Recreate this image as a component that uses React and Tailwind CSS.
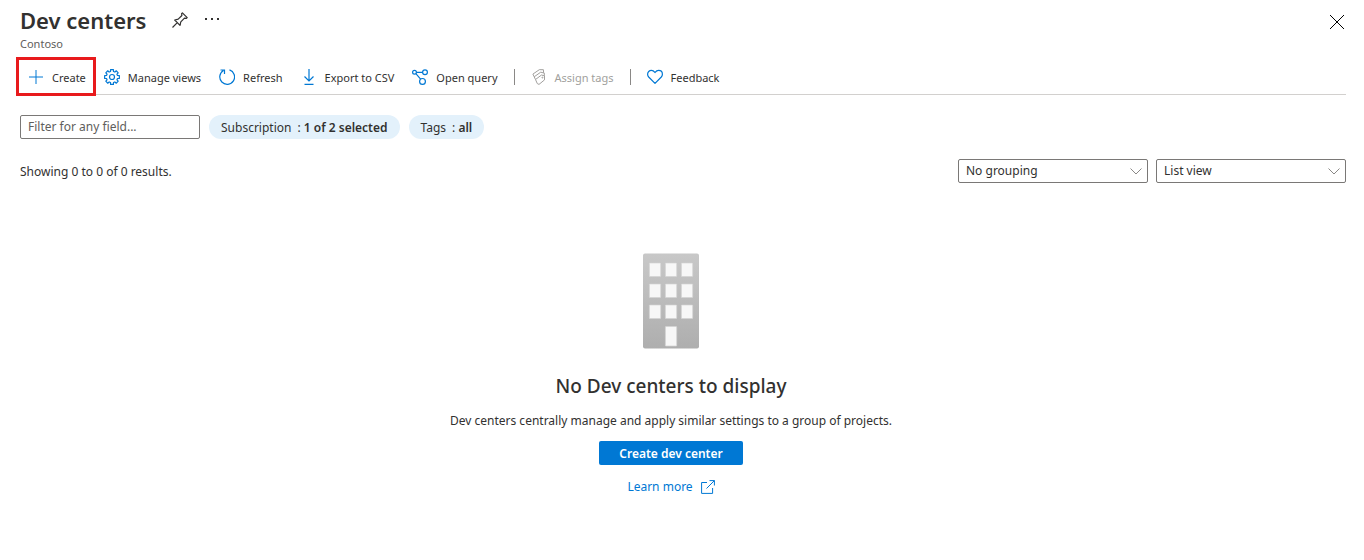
function Icon({ size = 16, box = 16, className = '', width = 1, children }) {
  return (
    <svg
      width={size}
      height={size}
      viewBox={`0 0 ${box} ${box}`}
      fill="none"
      stroke="currentColor"
      strokeWidth={width}
      className={`shrink-0 ${className}`}
      aria-hidden="true"
    >
      {children}
    </svg>
  );
}

const PlusIcon = () => (
  <Icon className="text-[#0078d4]">
    <path d="M8 1v14M1 8h14" />
  </Icon>
);

const TOOTH_ANGLES = [0, 45, 90, 135, 180, 225, 270, 315];

function toothPoint(radius, degrees) {
  const angle = (degrees * Math.PI) / 180;
  return `${(8 + radius * Math.cos(angle)).toFixed(2)} ${(8 + radius * Math.sin(angle)).toFixed(2)}`;
}

const GEAR_PATH = `M${TOOTH_ANGLES.map((a) =>
  [toothPoint(5.7, a - 15), toothPoint(7.5, a - 11), toothPoint(7.5, a + 11), toothPoint(5.7, a + 15)].join('L'),
).join('L')}z`;

const GearIcon = () => (
  <Icon className="text-[#0078d4]" width={1.2}>
    <path strokeLinejoin="round" d={GEAR_PATH} />
    <circle cx="8" cy="8" r="2.500" />
  </Icon>
);

const RefreshIcon = () => (
  <Icon className="text-[#0078d4]" width={1.2}>
    <path d="M10.500 .9A7.400 7.400 0 1 1 4.500 1.500M1.500 1h4v4" />
  </Icon>
);

const DownloadIcon = () => (
  <Icon className="text-[#0078d4]" width={1.2}>
    <path d="M8 0v12M3.500 7.500 8 12l4.500-4.500M3.500 15.400h9" />
  </Icon>
);

const QueryIcon = () => (
  <Icon className="text-[#0078d4]" width={1.2}>
    <circle cx="2.500" cy="3.300" r="1.900" />
    <circle cx="13" cy="3.300" r="2.400" />
    <circle cx="10.500" cy="12.400" r="2.900" />
    <path d="M4.400 3.300h6.200M3.900 4.700l4.700 5.400" />
  </Icon>
);

const TagsIcon = () => (
  <Icon className="text-[#a19f9d]">
    <path
      strokeLinejoin="round"
      d="M4.500 10.500 10.500 6l3 .9v4L8 15.400 6.300 14.600zM4.500 10.500 3.200 7.800 9.700 3.200l3.600.9v2.800M3.200 7.800 1.900 5.100 8.300.7h4.100l.2 3.200"
    />
    <circle cx="11.400" cy="8.600" r=".5" />
  </Icon>
);

const HeartIcon = () => (
  <Icon className="text-[#0078d4]" width={1.2}>
    <path
      strokeLinejoin="round"
      d="M8 14.400 1.700 8A4.100 4.100 0 0 1 .6 5.200C.6 3 2.300 1.400 4.400 1.400 6.400 1.400 7.200 2.500 8 3.500c.8-1 1.600-2.100 3.600-2.100 2.100 0 3.800 1.600 3.800 3.800 0 1.100-.4 2-1.100 2.800z"
    />
  </Icon>
);

function Command({ icon, label, disabled }) {
  return (
    <button
      type="button"
      disabled={disabled}
      className={`flex h-8 items-center gap-2 pr-2.5 pl-2 text-[11px] whitespace-nowrap ${disabled ? 'text-[#a19f9d]' : ''}`}
    >
      {icon}
      <span className="pt-0.5">{label}</span>
    </button>
  );
}

const Divider = () => <span className="mr-2 ml-1.5 h-4 w-px bg-[#8a8886]" />;

function Picker({ label, options }) {
  return (
    <div className="relative">
      <select
        aria-label={label}
        className="block h-6 w-[190px] appearance-none rounded-xs border border-[#7a7876] bg-white pr-6 pl-[7px] leading-5"
      >
        {options.map((option) => (
          <option key={option}>{option}</option>
        ))}
      </select>
      <Icon size={12} box={12} className="pointer-events-none absolute top-1.5 right-1.5 text-[#8a8886]">
        <path d="m.5 3.500 5.500 5.500 5.500-5.500" />
      </Icon>
    </div>
  );
}

function Pill({ name, value }) {
  return (
    <button type="button" className="flex h-6 items-center gap-1.5 rounded-full bg-[#e3f1fb] px-3 pt-0.5 whitespace-nowrap">
      <span>{name}</span>
      <span>
        : <b className="font-semibold">{value}</b>
      </span>
    </button>
  );
}

const WINDOW_ROWS = [10, 31, 52];
const WINDOW_COLUMNS = [7, 23, 39];

function Building() {
  return (
    <svg width="56" height="96" viewBox="0 0 56 96" aria-hidden="true">
      <defs>
        <linearGradient id="wall" x1="0" y1="0" x2="0" y2="1">
          <stop offset="0" stopColor="#c8c8c8" />
          <stop offset="1" stopColor="#aeaeae" />
        </linearGradient>
      </defs>
      <rect width="56" height="95" y=".5" rx="2" fill="url(#wall)" />
      <g fill="#f7f7f7" stroke="#d2d2d2" strokeWidth=".7">
        {WINDOW_ROWS.map((y) =>
          WINDOW_COLUMNS.map((x) => <rect key={`${x}-${y}`} x={x - 0.6} y={y} width="11.300" height="13.500" rx=".5" />),
        )}
        <rect x="22.400" y="73.500" width="11.300" height="19.500" rx=".5" />
      </g>
    </svg>
  );
}

export default function App() {
  return (
    <main className="bg-white pr-[18px] pl-5 font-['Noto_Sans','Open_Sans',sans-serif] text-[12px] leading-4 text-[#323130]">
      <header className="flex items-start justify-between">
        <div>
          <div className="flex h-9 items-center pt-1">
            <h1 className="text-[22px] leading-8 font-semibold">Dev centers</h1>
            <button type="button" aria-label="Pin" className="ml-[26px]">
              <Icon className="text-[#323130]" width={1.2}>
                <path
                  strokeLinejoin="round"
                  d="m.5 15.500 4.800-4.800M2.700 8l5.300 5.300.8-3.500 3.700-3.700 1.900.3.800-.8L10.400.8l-.8.8.3 1.900-3.700 3.700z"
                />
              </Icon>
            </button>
            <button type="button" aria-label="More" className="ml-4">
              <Icon>
                <g fill="currentColor" stroke="none">
                  <rect x="1" y="6" width="2" height="2" />
                  <rect x="7" y="6" width="2" height="2" />
                  <rect x="13" y="6" width="2" height="2" />
                </g>
              </Icon>
            </button>
          </div>
          <p className="text-[11px] text-[#605e5c]">Contoso</p>
        </div>
        <button type="button" aria-label="Close" className="mt-3.5 mr-px text-black">
          <Icon>
            <path d="m1 1 14 14M15 1 1 15" />
          </Icon>
        </button>
      </header>

      <nav aria-label="Commands" className="mt-2 flex h-[35px] items-center border-b border-[#d2d0ce]">
        <div className="relative">
          <Command icon={<PlusIcon />} label="Create" />
          <span className="pointer-events-none absolute -top-1 right-0 -bottom-[3px] -left-1 border-3 border-[#e81a1c]" />
        </div>
        <Command icon={<GearIcon />} label="Manage views" />
        <Command icon={<RefreshIcon />} label="Refresh" />
        <Command icon={<DownloadIcon />} label="Export to CSV" />
        <Command icon={<QueryIcon />} label="Open query" />
        <Divider />
        <Command icon={<TagsIcon />} label="Assign tags" disabled />
        <Divider />
        <Command icon={<HeartIcon />} label="Feedback" />
      </nav>

      <div className="mt-5 flex items-center gap-[9px]">
        <input
          type="text"
          aria-label="Filter"
          placeholder="Filter for any field..."
          className="h-6 w-[180px] rounded-xs border border-[#7a7876] px-[7px] pb-0.5 placeholder:text-[#605e5c]"
        />
        <Pill name="Subscription" value="1 of 2 selected" />
        <Pill name="Tags" value="all" />
      </div>

      <div className="mt-5 flex items-center justify-between">
        <p className="pt-0.5">Showing 0 to 0 of 0 results.</p>
        <div className="flex gap-2">
          <Picker label="Grouping" options={['No grouping']} />
          <Picker label="View" options={['List view']} />
        </div>
      </div>

      <section className="mt-[70px] mr-6 flex flex-col items-center">
        <Building />
        <h2 className="mt-6 text-[19px] leading-[26px] font-medium">No Dev centers to display</h2>
        <p className="mt-3 leading-5">
          Dev centers centrally manage and apply similar settings to a group of projects.
        </p>
        <button type="button" className="mt-2.5 h-6 rounded-xs bg-[#0078d4] px-5 pt-0.5 font-semibold text-white">
          Create dev center
        </button>
        <a href="#learn-more" className="mt-3.5 flex items-center gap-2 text-[#0078d4]">
          Learn more
          <Icon size={14} box={14}>
            <path d="M6 2.500H.6v10.900h11V8M8.500.6h4.900v4.900M13.400.6 5.500 8.500" />
          </Icon>
        </a>
      </section>
    </main>
  );
}
